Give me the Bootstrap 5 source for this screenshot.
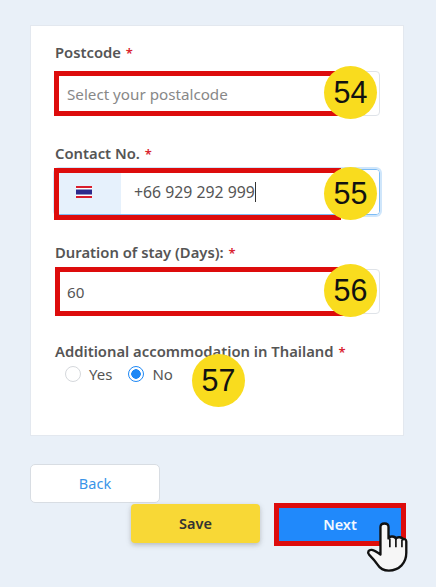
<!DOCTYPE html>
<html lang="en">
<head>
<meta charset="utf-8">
<title>Form</title>
<link href="https://cdn.jsdelivr.net/npm/bootstrap@5.3.0/dist/css/bootstrap.min.css" rel="stylesheet">
<style>
html,body{height:587px;overflow:hidden}
body{background:#e9f0f8;font-family:"Noto Sans","Open Sans",sans-serif;color:#555}
.pagewrap{padding:25px 32px 0 30px}
.formcard{height:411px;border:1px solid #e3e8ef;border-radius:0;padding:16px 23px 0 24px}
.ctrlwrap{position:relative}
.fieldlabel{display:block;font-size:14.8px;font-weight:600;color:#555;line-height:20px;margin:27px 0 7px;white-space:nowrap}
.firstlabel{margin:0 0 9px}
.phonelabel{margin-bottom:6px}
.radiolabel{margin-bottom:4px}
.req{color:#d9232e;font-size:13px;line-height:0;margin-left:1px}
.fieldinput{height:45px;font-size:15.2px;color:#555;border-color:#dfe3e8;border-radius:4px;padding:0 12px 0 11px;box-shadow:none}
.fieldinput::placeholder{color:#888}
.phonegroup{height:46px;border-radius:4px;border:1px solid #7dbcf5;box-shadow:0 0 0 2px #cfe6fb;overflow:hidden;flex-wrap:nowrap}
.flagbox{width:66px;background:#e6f1fc;border:0;border-right:1px solid #d6dbe6;border-radius:0;justify-content:center;padding:0 9px 0 0}
.phoneinput{border:0;height:44px;border-radius:0;padding-left:13px;font-size:15.8px}
.redbox{position:absolute;left:-1px;width:291px;border:5px solid #dd0c0c;pointer-events:none}
.redpost{top:0;height:45px}
.redphone{top:-1px;height:52px;width:287px}
.redstay{top:-2px;left:0;width:290px;height:49px}
.numdot{position:absolute;left:269px;top:-5px;width:53px;height:53px;border-radius:50%;background:#f9dc1e;color:#111;display:flex;align-items:center;justify-content:center;font:30.5px/1 "Liberation Sans",Arial,sans-serif}
.dotphone{top:-2px}
.dotradio{left:137px;top:-11px}
.caretbar{position:absolute;left:200px;top:13px;width:1px;height:20px;background:#333}
.radiorow{padding-left:10px;margin-top:-1px;gap:16px;font-size:15px}
.radiorow .form-check{margin:0;padding-left:24px;min-height:0;line-height:20px}
.radiorow .form-check-input{width:16px;height:16px;margin-top:2px;margin-left:-24px;border-color:#d5d8dc}
.radiorow .form-check-input:checked{background-color:#fff;border-color:#1e88f5;background-image:radial-gradient(circle,#1e88f5 0 4.5px,transparent 5px)}
.backbtn{width:130px;height:39px;background:#fff;border:1px solid #d8dde3;color:#3a94e8;font-size:14.5px;border-radius:5px;margin-top:28px;display:flex;align-items:center;justify-content:center}
.actionrow{padding-right:3px;gap:19px}
.savebtn{width:129px;height:39px;background:#f8d836;border:0;color:#333;font-size:14.5px;font-weight:600;border-radius:4px;box-shadow:0 2px 5px rgba(90,90,90,.35);margin-top:1px}
.nextbtn{width:122px;height:33px;background:#2089fb;border:0;color:#f3f8ff;font-size:14.5px;font-weight:600;border-radius:0;padding:0;margin-top:5px}
.nextframe{position:relative}
.nextred{left:-5px;top:0;width:132px;height:43px}
.handicon{position:absolute;left:87px;top:18px;width:42px;height:52px}
</style>
</head>
<body>
<div class="pagewrap">
  <div class="card formcard">
    <label class="fieldlabel firstlabel">Postcode <span class="req">*</span></label>
    <div class="ctrlwrap">
      <input class="form-control fieldinput" placeholder="Select your postalcode">
      <div class="redbox redpost"></div>
      <div class="numdot">54</div>
    </div>
    <label class="fieldlabel phonelabel">Contact No. <span class="req">*</span></label>
    <div class="ctrlwrap">
      <div class="input-group phonegroup">
        <span class="input-group-text flagbox">
          <svg width="16" height="12" viewBox="0 0 16 12" aria-hidden="true"><rect width="16" height="12" fill="#d81e2c"/><rect y="2" width="16" height="8" fill="#fff"/><rect y="3.5" width="16" height="5" fill="#2d2a8c"/></svg>
        </span>
        <input class="form-control fieldinput phoneinput" value="+66 929 292 999">
      </div>
      <div class="caretbar"></div>
      <div class="redbox redphone"></div>
      <div class="numdot dotphone">55</div>
    </div>
    <label class="fieldlabel">Duration of stay (Days): <span class="req">*</span></label>
    <div class="ctrlwrap">
      <input class="form-control fieldinput" value="60">
      <div class="redbox redstay"></div>
      <div class="numdot">56</div>
    </div>
    <label class="fieldlabel radiolabel">Additional accommodation in Thailand <span class="req">*</span></label>
    <div class="ctrlwrap">
      <div class="d-flex radiorow">
        <div class="form-check"><input class="form-check-input" type="radio" name="acc" id="ay"><label class="form-check-label" for="ay">Yes</label></div>
        <div class="form-check"><input class="form-check-input" type="radio" name="acc" id="an" checked><label class="form-check-label" for="an">No</label></div>
      </div>
      <div class="numdot dotradio">57</div>
    </div>
  </div>
  <button class="btn backbtn" type="button">Back</button>
  <div class="d-flex justify-content-end actionrow">
    <button class="btn savebtn" type="button">Save</button>
    <div class="nextframe">
      <button class="btn nextbtn" type="button">Next</button>
      <div class="redbox nextred"></div>
      <svg class="handicon" viewBox="315 100 125 155" aria-hidden="true"><path d="M358 196V118c0-14 24-14 24 0v34c2-8 20-8 22 1 3-7 19-6 21 2 3-3 10-1 10 6v34c0 30-20 52-52 53-16 0-26-5-33-17-8-12-16-21-26-31-6-7-1-15 8-14 10 2 18 8 26 14z" fill="#f6f6f6" stroke="#111" stroke-width="7" stroke-linejoin="round"/><path d="M386 152v26M404 154v24M422 156v22" stroke="#111" stroke-width="5" fill="none"/></svg>
    </div>
  </div>
</div>
</body>
</html>
